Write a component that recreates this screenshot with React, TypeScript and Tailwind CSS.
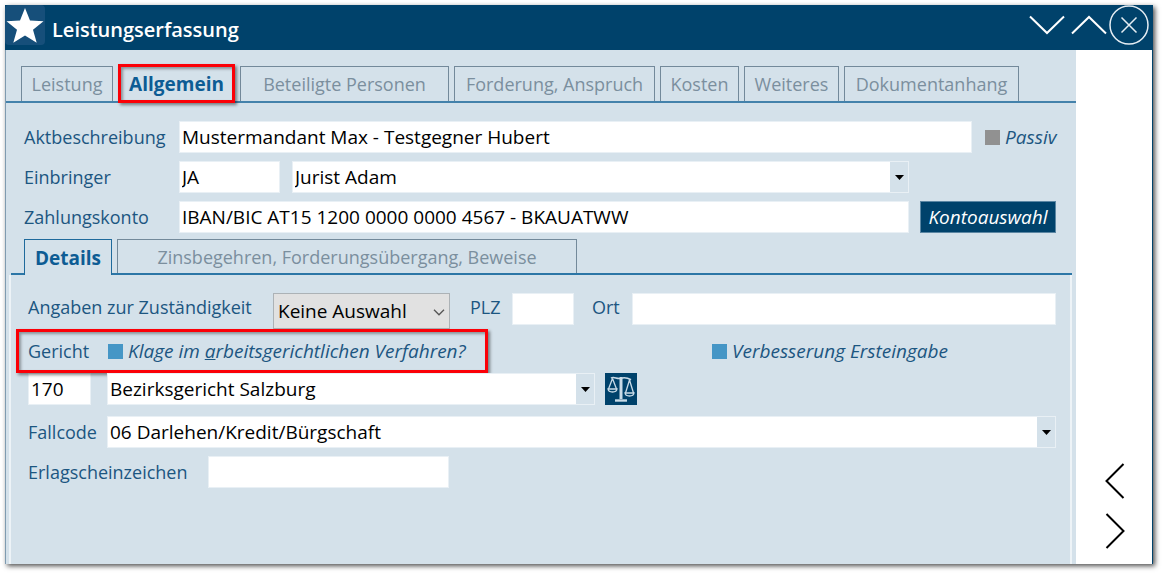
import type { ReactNode } from "react";
import { clsx } from "clsx";

const mainTabs = [
  { label: "Leistung", width: "w-[92px]" },
  { label: "Allgemein", width: "w-[117px]", active: true },
  { label: "Beteiligte Personen", width: "w-[209px]" },
  { label: "Forderung, Anspruch", width: "w-[201px]" },
  { label: "Kosten", width: "w-[79px]" },
  { label: "Weiteres", width: "w-[95px]" },
  { label: "Dokumentanhang", width: "w-[175px]" },
];

function Field({ id, value, className, label }: { id: string; value?: string; className: string; label?: string }) {
  return (
    <input
      id={id}
      type="text"
      aria-label={label}
      defaultValue={value}
      className={clsx("h-8 min-w-0 border border-[#e9f0f5] bg-white px-0.5 text-[19px] text-black outline-none", className)}
    />
  );
}

function Combo({ id, value, className, label }: { id: string; value: string; className: string; label?: string }) {
  return (
    <div className={clsx("relative h-8 min-w-0", className)}>
      <select
        id={id}
        aria-label={label}
        className="h-full w-full appearance-none border border-[#e9f0f5] bg-white pl-0.5 pr-6 text-[19px] text-black outline-none"
      >
        <option>{value}</option>
      </select>
      <span className="pointer-events-none absolute inset-y-px right-px flex w-[18px] items-center justify-center bg-[#d4e1ea]">
        <svg width="9" height="5" viewBox="0 0 9 5">
          <path d="M0 0h9L4.5 5z" fill="#000" />
        </svg>
      </span>
    </div>
  );
}

function Check({ color, children, className }: { color: string; children: ReactNode; className?: string }) {
  return (
    <label className={clsx("flex items-center gap-[5px] text-[19px] whitespace-nowrap italic", className)}>
      <input type="checkbox" className={clsx("size-[15px] shrink-0 appearance-none", color)} />
      <span>{children}</span>
    </label>
  );
}

// Red frame drawn over the element that should be noticed
function Marker({ className }: { className: string }) {
  return (
    <span
      className={clsx(
        "pointer-events-none absolute border-3 border-[#fb0007] shadow-[2px_2px_3px_rgba(0,0,0,0.45),inset_2px_2px_3px_rgba(0,0,0,0.35)]",
        className
      )}
    />
  );
}

function ScaleIcon() {
  return (
    <svg width="28" height="28" viewBox="0 0 28 28" fill="none" stroke="#c9dbe7" strokeWidth="1.3">
      <path d="M4 3.2C7 1 10 4.500 14 3.200C18 2 21 3 24 4.800" strokeWidth="1.600" />
      <path d="M14 2v22" strokeWidth="3" />
      <path d="M8 25.500h12" strokeWidth="2.400" />
      <path d="M5.500 3.500L1.500 14M5.500 3.500L9.500 14M22.500 5L18.500 18M22.500 5L26.500 18" />
      <path d="M1 14h9c-.5 4-8.500 4-9 0zM18 18h9c-.5 4-8.500 4-9 0z" />
    </svg>
  );
}

export default function App() {
  return (
    <div className="flex min-h-screen flex-col bg-white pt-[5px] pr-[9px] pb-[9px] pl-[5px] font-['Open_Sans',sans-serif] text-lg leading-7 text-[#1c5681]">
      <div className="flex flex-1 flex-col border-r border-l border-l-[#7f9bb0] border-r-[#00426b] shadow-[2px_2px_5px_rgba(0,0,0,0.7)]">
        <header className="-mx-px flex h-[45px] items-center bg-[#00426b] pr-1 text-white">
          <span className="flex size-10 items-center justify-center self-start rounded bg-[#164f7a]">
            <svg width="38" height="36" viewBox="0 0 38 36" fill="#fff">
              <path d="M19 1l5 12.500 13.500.700-10.500 8.500 3.700 13L19 28.500 7.300 35.700l3.700-13L.500 14.200 14 13.500z" />
            </svg>
          </span>
          <h1 className="ml-[7px] flex-1 pt-1 text-xl font-semibold">Leistungserfassung</h1>
          <div className="flex items-center self-start">
            <button type="button" aria-label="Nach unten" className="flex h-10 w-[42px] items-center justify-center">
              <svg width="36" height="20" viewBox="0 0 36 20" fill="none" stroke="#fff" strokeWidth="2">
                <path d="M1 1.500l17 16.500 17-16.500" />
              </svg>
            </button>
            <button type="button" aria-label="Nach oben" className="flex h-10 w-[41px] items-center justify-center">
              <svg width="36" height="20" viewBox="0 0 36 20" fill="none" stroke="#fff" strokeWidth="2">
                <path d="M1 18.500L18 2l17 16.500" />
              </svg>
            </button>
            <button type="button" aria-label="Schließen" className="flex size-10 items-center justify-center">
              <svg width="40" height="40" viewBox="0 0 40 40" fill="none" stroke="#e5edf3" strokeWidth="1.500">
                <circle cx="20" cy="20" r="19" />
                <path d="M12.500 12.500l15 15M27.500 12.500l-15 15" />
              </svg>
            </button>
          </div>
        </header>

        <div className="flex flex-1">
          <main className="flex min-w-0 flex-1 flex-col bg-[#d4e1ea] pt-4">
            <nav className="flex gap-[5px] border-b-2 border-[#4482ab] pl-[15px] text-[#7b8f9e]">
              {mainTabs.map((tab) =>
                tab.active ? (
                  <button key={tab.label} type="button" className={clsx("relative h-[35px] text-[19px] font-bold whitespace-nowrap text-[#0d5c94]", tab.width)}>
                    {tab.label}
                    <Marker className="inset-x-0 -top-0.5 -bottom-0.5" />
                  </button>
                ) : (
                  <button key={tab.label} type="button" className={clsx("h-[35px] border border-b-0 border-[#73899a] whitespace-nowrap", tab.width)}>
                    {tab.label}
                  </button>
                )
              )}
            </nav>

            <div className="flex flex-col gap-2 pt-[18px] pl-[18px]">
              <div className="flex items-center">
                <label htmlFor="akt" className="w-[155px]">Aktbeschreibung</label>
                <Field id="akt" value="Mustermandant Max - Testgegner Hubert" className="flex-1" />
                <Check color="bg-[#919191]" className="w-[104px] pl-[13px]">Passiv</Check>
              </div>
              <div className="flex items-center">
                <label htmlFor="einbringer" className="w-[155px]">Einbringer</label>
                <Field id="einbringer" value="JA" className="w-[101px]" />
                <Combo id="jurist" label="Jurist" value="Jurist Adam" className="mr-[167px] ml-3 flex-1" />
              </div>
              <div className="flex items-center">
                <label htmlFor="konto" className="w-[155px]">Zahlungskonto</label>
                <Field id="konto" value="IBAN/BIC AT15 1200 0000 0000 4567 - BKAUATWW" className="flex-1" />
                <button type="button" className="mr-5 ml-[11px] h-8 w-[136px] border border-[#5b86a3] bg-[#00426b] text-[19px] text-white italic">
                  Kontoauswahl
                </button>
              </div>
            </div>

            <div className="mt-1.5 mr-1 ml-[5px] flex gap-[5px] border-b-2 border-[#2c76a6] pl-[13px]">
              <button type="button" className="-mb-0.5 h-9 w-[88px] border border-b-0 border-[#1f6a9c] bg-[#d4e1ea] text-[19px] font-bold text-[#0d5c94]">
                Details
              </button>
              <button type="button" className="h-[34px] w-[460px] border border-b-0 border-[#73899a] whitespace-nowrap text-[#7b8f9e]">
                Zinsbegehren, Forderungsübergang, Beweise
              </button>
            </div>

            <div className="mr-1 ml-[3px] flex-1 border-x-2 border-[#edf3f7] pt-[18px] pr-[14px] pb-4 pl-[17px]">
              <div className="flex items-start">
                <label htmlFor="zustand" className="w-[245px] whitespace-nowrap">Angaben zur Zuständigkeit</label>
                <div className="relative w-[177px]">
                  <select id="zustand" className="h-9 w-full appearance-none border border-[#acb2b6] bg-[#e1e1e1] pl-1 text-[19px] text-black">
                    <option>Keine Auswahl</option>
                  </select>
                  <svg className="pointer-events-none absolute top-4 right-[5px]" width="12" height="7" viewBox="0 0 12 7" fill="none" stroke="#555" strokeWidth="1.300">
                    <path d="M1 .8l5 5 5-5" />
                  </svg>
                </div>
                <label htmlFor="plz" className="w-[62px] pl-5">PLZ</label>
                <Field id="plz" className="w-[62px]" />
                <label htmlFor="ort" className="w-[58px] pl-[18px]">Ort</label>
                <Field id="ort" className="flex-1" />
              </div>

              <div className="flex h-11 items-center">
                <div className="relative flex h-full w-[460px] items-center">
                  <span className="w-20">Gericht</span>
                  <Check color="bg-[#4596c6]">
                    Klage im <u>a</u>rbeitsgerichtlichen Verfahren?
                  </Check>
                  <Marker className="inset-y-0 right-0 -left-3" />
                </div>
                <Check color="bg-[#4596c6]" className="mr-[108px] ml-auto">Verbesserung Ersteingabe</Check>
              </div>

              <div className="flex items-center">
                <Field id="gerichtnr" label="Gerichtsnummer" value="170" className="w-[63px]" />
                <Combo id="gericht" label="Gericht" value="Bezirksgericht Salzburg" className="ml-4 w-[488px]" />
                <button type="button" aria-label="Gericht suchen" className="ml-[10px] flex size-8 items-center justify-center bg-[#00426b]">
                  <ScaleIcon />
                </button>
              </div>

              <div className="mt-[11px] flex items-center">
                <label htmlFor="fallcode" className="w-[79px]">Fallcode</label>
                <Combo id="fallcode" value="06 Darlehen/Kredit/Bürgschaft" className="flex-1" />
              </div>

              <div className="mt-2 flex items-center">
                <label htmlFor="erlag" className="w-[180px]">Erlagscheinzeichen</label>
                <Field id="erlag" className="w-[241px]" />
              </div>
            </div>
          </main>

          <aside className="flex w-[76px] flex-col items-center justify-end gap-4 bg-white pb-4 pl-0.5">
            <button type="button" aria-label="Zurück" className="flex h-[34px] w-10 items-center justify-center">
              <svg width="20" height="36" viewBox="0 0 20 36" fill="none" stroke="#000" strokeWidth="2">
                <path d="M18.500 1L1.500 18l17 17" />
              </svg>
            </button>
            <button type="button" aria-label="Weiter" className="flex h-[34px] w-10 items-center justify-center">
              <svg width="20" height="36" viewBox="0 0 20 36" fill="none" stroke="#000" strokeWidth="2">
                <path d="M1.500 1l17 17-17 17" />
              </svg>
            </button>
          </aside>
        </div>
      </div>
    </div>
  );
}
